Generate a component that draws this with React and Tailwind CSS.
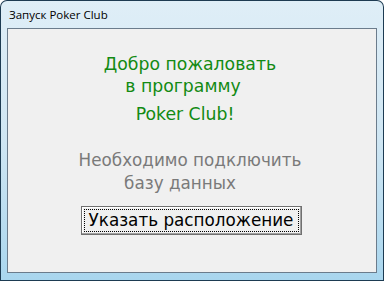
import React from "react";

const App = () => {
  return (
    <div className="w-[384px] h-[281px] bg-[#1d3b52] rounded-t-[7px] p-px overflow-hidden">
      <div className="w-full h-full flex flex-col rounded-t-[6px] bg-gradient-to-b from-[#dfeef7] via-[#cfe6f3] to-[#a9d6ee] px-[6px] pb-[7px]">
        {/* Title bar */}
        <div className="h-[27px] flex items-center pl-[2px]">
          <span className="text-[11.5px] text-black font-['Open_Sans',sans-serif] leading-none">
            Запуск Poker Club
          </span>
        </div>

        {/* Client area */}
        <div className="flex-1 border border-[#6b7c8c] bg-[#f0f0f0] flex flex-col items-center pr-[4px] font-['DejaVu_Sans',sans-serif]">
          <div className="mt-[24px] flex flex-col items-center text-[#138a13] text-[17.3px] leading-[22px]">
            <p>Добро пожаловать</p>
            <p className="pr-[14px]">в программу</p>
            <p className="mt-[6px] pr-[10px]">Poker Club!</p>
          </div>
          <div className="mt-[24px] flex flex-col items-center text-[#7a7a7a] text-[16.8px] leading-[23px]">
            <p>Необходимо подключить</p>
            <p className="pr-[20px]">базу данных</p>
          </div>
          <button className="mt-[11px] ml-[2px] w-[221px] h-[29px] border border-[#707070] bg-[#f0f0f0] p-[2px] shadow-[inset_-1px_-1px_0_#a0a0a0,inset_1px_1px_0_#ffffff]">
            <div className="w-full h-full border border-dotted border-black flex items-center justify-center text-[16.8px] text-black leading-none whitespace-nowrap">
              Указать расположение
            </div>
          </button>
        </div>
      </div>
    </div>
  );
};

export default App;
